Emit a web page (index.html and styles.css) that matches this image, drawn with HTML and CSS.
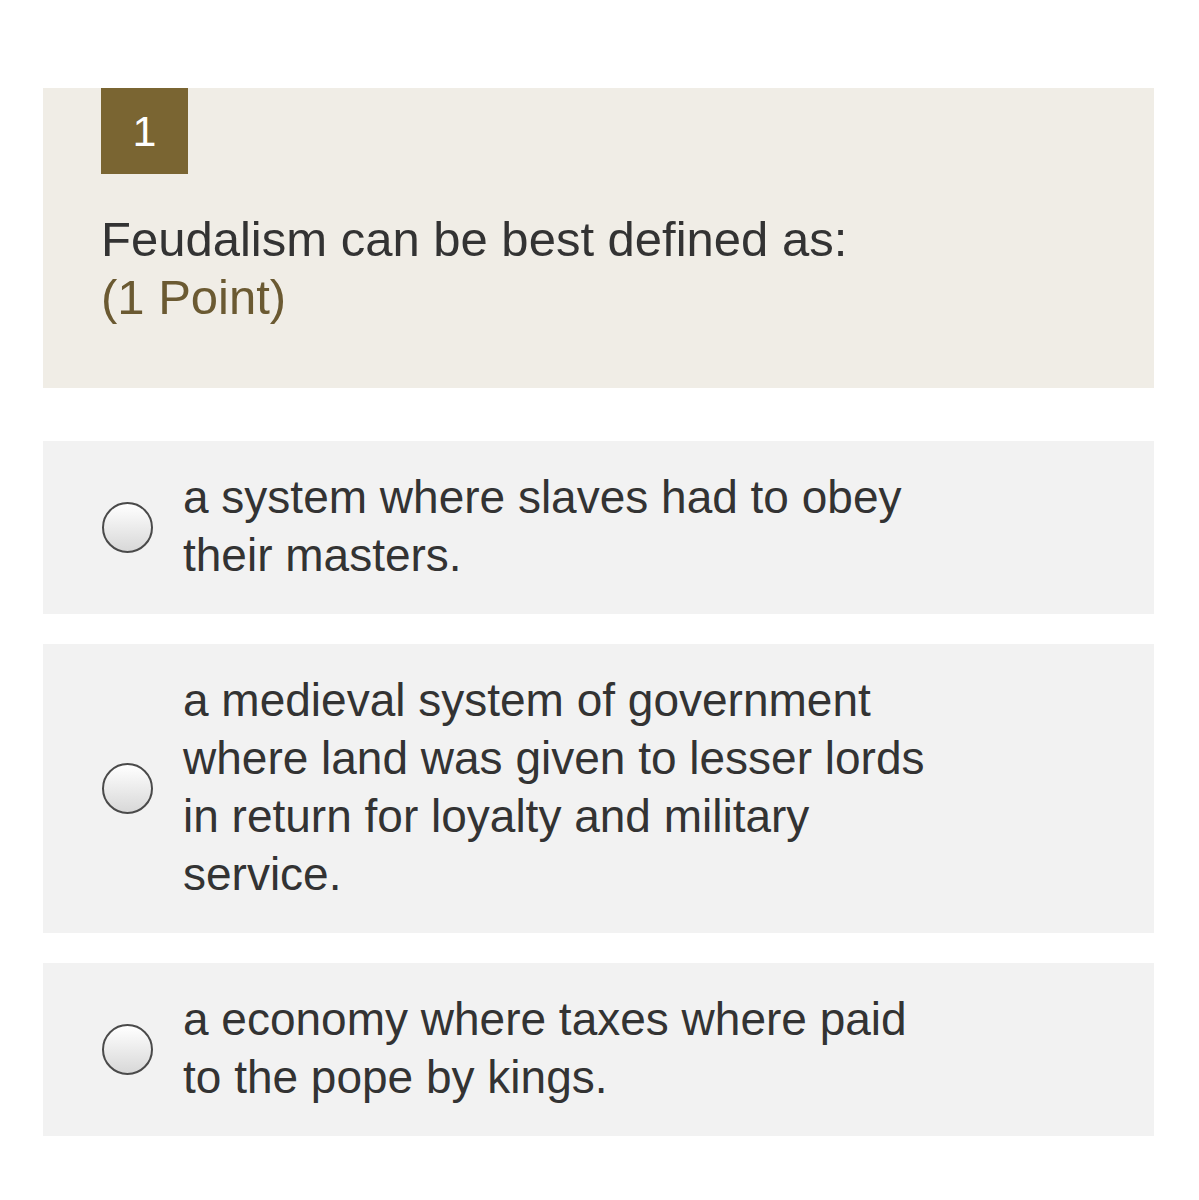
FILE: index.html
```html
<!DOCTYPE html>
<html>
<head>
<meta charset="utf-8">
<link rel="stylesheet" href="styles.css">
</head>
<body>
<div class="page">
  <div class="question">
    <div class="badge">1</div>
    <div class="qtext">Feudalism can be best defined as:</div>
    <div class="points">(1 Point)</div>
  </div>
  <div class="options">
    <label class="option">
      <span class="radio"></span>
      <span class="otext">a system where slaves had to obey their masters.</span>
    </label>
    <label class="option">
      <span class="radio"></span>
      <span class="otext">a medieval system of government where land was given to lesser lords in return for loyalty and military service.</span>
    </label>
    <label class="option">
      <span class="radio"></span>
      <span class="otext">a economy where taxes where paid to the pope by kings.</span>
    </label>
  </div>
</div>
</body>
</html>
```

FILE: styles.css
```css
html, body {
  margin: 0;
  padding: 0;
  background: #ffffff;
}
body {
  font-family: "Liberation Sans", Arial, sans-serif;
}
.page {
  width: 1111px;
  margin-left: 43px;
  padding-top: 88px;
}
.question {
  background: #f0ede6;
  padding: 0 58px 62px 58px;
}
.badge {
  width: 87px;
  height: 86px;
  background: #7a6532;
  color: #ffffff;
  font-size: 43px;
  display: flex;
  align-items: center;
  justify-content: center;
  margin-bottom: 36px;
}
.qtext {
  font-size: 49px;
  line-height: 58px;
  color: #333333;
}
.points {
  font-size: 49px;
  line-height: 58px;
  color: #6b5a32;
}
.options {
  margin-top: 53px;
  display: flex;
  flex-direction: column;
  gap: 30px;
}
.option {
  background: #f2f2f2;
  display: flex;
  align-items: center;
  padding: 27px 40px 30px 59px;
}
.radio {
  flex: none;
  width: 47px;
  height: 47px;
  border: 2px solid #4a4a4a;
  border-radius: 50%;
  background: linear-gradient(#ffffff, #d8d8d8);
  margin-right: 30px;
  margin-top: 3px;
}
.otext {
  font-size: 46px;
  line-height: 58px;
  color: #333333;
  max-width: 762px;
}
```
